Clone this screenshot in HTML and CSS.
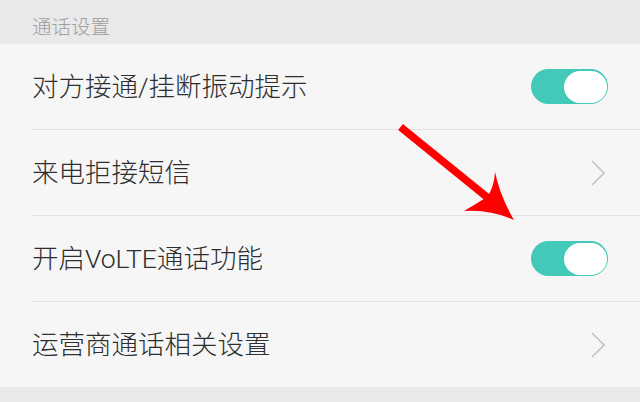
FILE: index.html
```html
<!DOCTYPE html>
<html>
<head>
<meta charset="utf-8">
<link rel="stylesheet" href="styles.css">
</head>
<body>
<div class="page">
  <div class="section-title">通话设置</div>
  <div class="list">
    <div class="row">
      <span class="label">对方接通/挂断振动提示</span>
      <span class="switch on"><span class="knob"></span></span>
    </div>
    <div class="row">
      <span class="label">来电拒接短信</span>
      <svg class="chevron" width="14" height="26" viewBox="0 0 14 26"><path d="M1 1 L13 13 L1 25" fill="none" stroke="#c3c3c3" stroke-width="1.6"/></svg>
    </div>
    <div class="row">
      <span class="label">开启VoLTE通话功能</span>
      <span class="switch on"><span class="knob"></span></span>
    </div>
    <div class="row last">
      <span class="label">运营商通话相关设置</span>
      <svg class="chevron" width="14" height="26" viewBox="0 0 14 26"><path d="M1 1 L13 13 L1 25" fill="none" stroke="#c3c3c3" stroke-width="1.6"/></svg>
    </div>
  </div>
  <div class="footer"></div>
  <svg class="arrow" width="640" height="402" viewBox="0 0 640 402">
    <line x1="400.5" y1="127" x2="493" y2="202" stroke="#ff0000" stroke-width="7.5"/>
    <path d="M514,220 Q500,196 495,172 Q494,188 487,197 Q476,204 464,211 Q490,209 514,220 Z" fill="#ff0000"/>
  </svg>
</div>
</body>
</html>
```

FILE: styles.css
```css
html, body {
  margin: 0;
  padding: 0;
}
body {
  width: 640px;
  height: 402px;
  overflow: hidden;
  background: #e9e9e9;
  font-family: Roboto, "Noto Sans CJK SC", sans-serif;
}
.page {
  position: relative;
  width: 640px;
  height: 402px;
  display: flex;
  flex-direction: column;
}
.section-title {
  height: 44px;
  box-sizing: border-box;
  padding: 15px 0 0 32px;
  font-size: 19.5px;
  line-height: 26px;
  font-weight: 300;
  color: #9e9e9e;
  background: #e9e9e9;
}
.list {
  background: #f6f6f6;
  padding-left: 32px;
}
.row {
  height: 86px;
  box-sizing: border-box;
  border-bottom: 1px solid #e2e2e2;
  display: flex;
  align-items: center;
  justify-content: space-between;
  padding-right: 33px;
}
.row.last {
  border-bottom: none;
  height: 85px;
}
.label {
  font-size: 26.5px;
  font-weight: 300;
  color: #2e2e2e;
  line-height: 30px;
}
.switch {
  width: 77px;
  height: 35px;
  border-radius: 18px;
  background: #42c9b7;
  box-sizing: border-box;
  padding: 1.5px;
  display: flex;
  justify-content: flex-end;
  margin-right: -1px;
}
.knob {
  width: 43px;
  height: 32px;
  border-radius: 16px;
  background: #ffffff;
}
.chevron {
  display: block;
  margin-right: 2px;
}
.footer {
  flex: 1;
  background: #e9e9e9;
}
.arrow {
  position: absolute;
  left: 0;
  top: 0;
  pointer-events: none;
}
```
